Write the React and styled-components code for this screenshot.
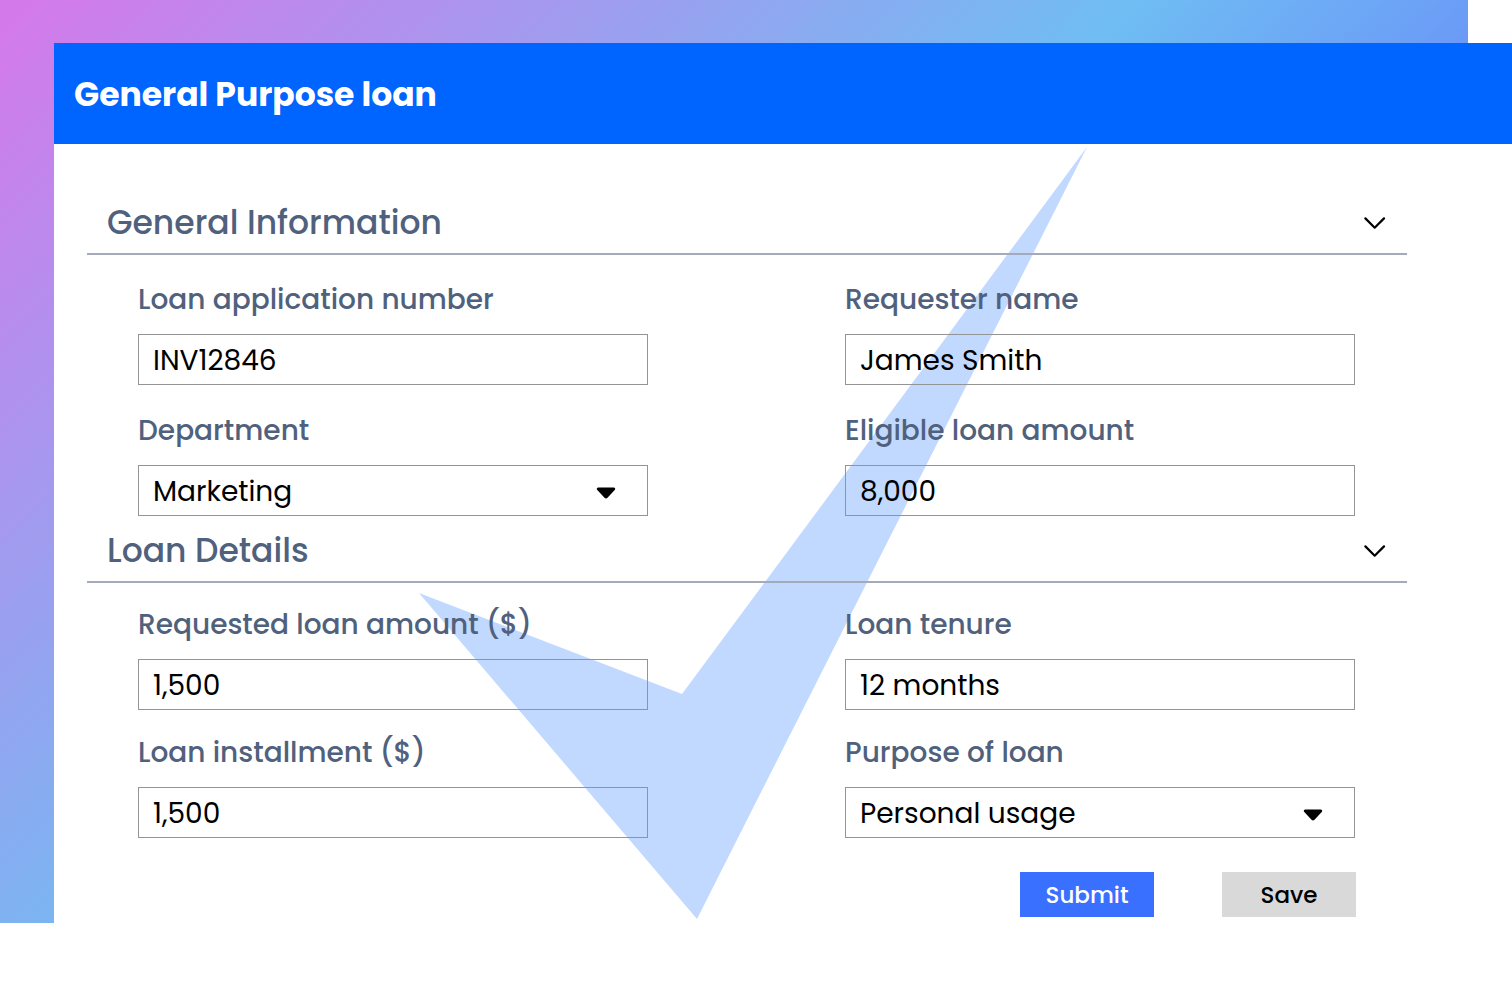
import React, { useState } from 'react';
import styled, { createGlobalStyle } from 'styled-components'

const GlobalStyle = createGlobalStyle`
  * {
    box-sizing: border-box;
  }
  body {
    margin: 0;
    background: #fff;
    font-family: Poppins, Inter, sans-serif;
  }
`

const general = [
  { id: 'number', label: 'Loan application number', value: 'INV12846' },
  { id: 'requester', label: 'Requester name', value: 'James Smith' },
  { id: 'department', label: 'Department', value: 'Marketing', options: ['Marketing', 'Sales', 'Finance'] },
  { id: 'eligible', label: 'Eligible loan amount', value: '8,000' },
]

const details = [
  { id: 'amount', label: 'Requested loan amount ($)', value: '1,500' },
  { id: 'tenure', label: 'Loan tenure', value: '12 months' },
  { id: 'installment', label: 'Loan installment ($)', value: '1,500' },
  { id: 'purpose', label: 'Purpose of loan', value: 'Personal usage', options: ['Personal usage', 'Education', 'Medical'] },
]

function Field({ id, label, value, options }) {
  return (
    <FieldBox>
      <Label htmlFor={id}>{label}</Label>
      {options ? (
        <SelectWrap>
          <Select id={id} defaultValue={value}>
            {options.map((o) => <option key={o}>{o}</option>)}
          </Select>
          <Caret viewBox="0 0 20 12" aria-hidden="true">
            <path d="M2.4 0.5h15.2c1.6 0 2.2 1.5 1.1 2.6l-7.2 7.6c-.9.9-2.1.9-3 0L1.3 3.1C.2 2 .8.5 2.4.5z" />
          </Caret>
        </SelectWrap>
      ) : (
        <Input id={id} type="text" defaultValue={value} />
      )}
    </FieldBox>
  )
}

function Section({ title, fields, tight }) {
  const [open, setOpen] = useState(true)

  return (
    <section>
      <SectionHeader>
        <SectionTitle>{title}</SectionTitle>
        <Toggle type="button" aria-label={title} aria-expanded={open} onClick={() => setOpen(!open)}>
          <svg width="22" height="16" viewBox="0 0 22 16" fill="none" stroke="#000" strokeWidth="2.2">
            <path d="M1.4 3.4L10.7 12.7l9.3-9.3" strokeLinecap="round" strokeLinejoin="round" />
          </svg>
        </Toggle>
      </SectionHeader>
      {open && (
        <Fields $tight={tight}>
          {fields.map((f) => <Field key={f.id} {...f} />)}
        </Fields>
      )}
    </section>
  )
}

export default function App() {
  return (
    <Page>
      <GlobalStyle />
      <Card>
        <Header>
          <Title>General Purpose loan</Title>
        </Header>
        <Form onSubmit={(e) => e.preventDefault()}>
          <CheckMark viewBox="0 0 668 772" aria-hidden="true">
            <path d="M668 0L278 772 0 446l263 101z" fill="#c2d9ff" />
          </CheckMark>
          <Section title="General Information" fields={general} />
          <Section title="Loan Details" fields={details} tight />
          <Actions>
            <Button type="submit" $primary>Submit</Button>
            <Button type="button">Save</Button>
          </Actions>
        </Form>
      </Card>
    </Page>
  )
}

const Page = styled.div`
  min-height: 100vh;
  padding: 43px 0 0 54px;
  background: linear-gradient(136deg, #d678ea 0%, #6fbdf3 47%, #6b96f7 64%) no-repeat;
  background-size: calc(100% - 44px) calc(100% - 59px);
`

const Card = styled.main`
  background: #fff;
`

const Header = styled.header`
  display: flex;
  align-items: center;
  height: 101px;
  padding: 2px 20px 0;
  background: #0064ff;
`

const Title = styled.h1`
  margin: 0;
  color: #fff;
  font-size: 33px;
  font-weight: 700;
`

const Form = styled.form`
  position: relative;
  isolation: isolate;
  padding: 47px 105px 65px 33px;
`

/* decoration behind the fields */
const CheckMark = styled.svg`
  position: absolute;
  z-index: -1;
  top: 3px;
  left: 365px;
  width: 668px;
  height: 772px;
`

const SectionHeader = styled.div`
  display: flex;
  align-items: center;
  justify-content: space-between;
  height: 64px;
  padding: 2px 21px 0 20px;
  border-bottom: 2px solid #a3aabb;
`

const SectionTitle = styled.h2`
  margin: 0;
  color: #50617d;
  font-size: 33px;
  font-weight: 500;
`

const Toggle = styled.button`
  display: flex;
  padding: 0;
  border: 0;
  background: none;
  cursor: pointer;
`

const Fields = styled.div`
  display: grid;
  grid-template-columns: 1fr 1fr;
  column-gap: 197px;
  row-gap: ${(p) => (p.$tight ? 22 : 25)}px;
  padding: ${(p) => (p.$tight ? '21px 52px 0 51px' : '24px 52px 3px 51px')};
`

const FieldBox = styled.div`
  display: flex;
  flex-direction: column;
  gap: 13px;
  min-width: 0;
`

const Label = styled.label`
  color: #50617d;
  font-size: 28px;
  font-weight: 500;
  line-height: 42px;
  white-space: nowrap;
`

const Input = styled.input`
  width: 100%;
  height: 51px;
  padding: 2px 14px 0;
  border: 1px solid #949494;
  border-radius: 0;
  background: transparent;
  color: #000;
  font-family: inherit;
  font-size: 28px;
`

const SelectWrap = styled.div`
  position: relative;
`

const Select = styled(Input).attrs({ as: 'select' })`
  display: block;
  appearance: none;
`

const Caret = styled.svg`
  position: absolute;
  top: 22px;
  right: 32px;
  width: 20px;
  height: 12px;
  pointer-events: none;
`

const Actions = styled.div`
  display: flex;
  justify-content: flex-end;
  gap: 68px;
  padding: 34px 51px 0 0;
`

const Button = styled.button`
  width: 134px;
  height: 45px;
  padding: 0;
  border: 0;
  background: ${(p) => (p.$primary ? '#3a70ff' : '#d9d9d9')};
  color: ${(p) => (p.$primary ? '#fff' : '#000')};
  font-family: inherit;
  font-size: 23px;
  font-weight: 500;
  cursor: pointer;
`
